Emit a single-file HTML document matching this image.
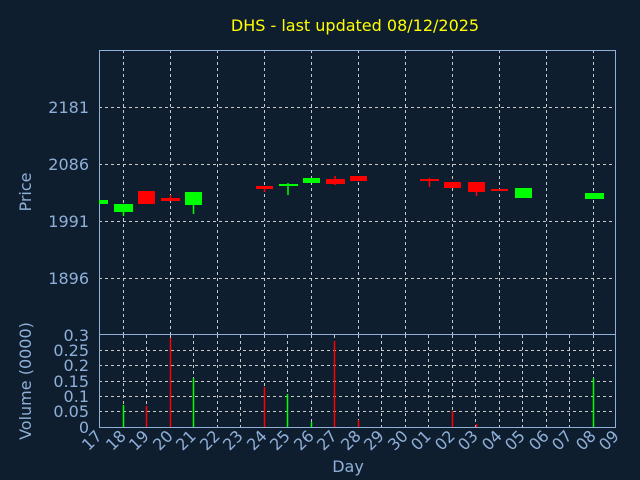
<!DOCTYPE html>
<html><head><style>
html,body{margin:0;padding:0;background:#0f1e2f;}
svg{display:block;font-family:"DejaVu Sans","Liberation Sans",sans-serif;}
</style></head><body>
<svg width="640" height="480" viewBox="0 0 640 480" xmlns="http://www.w3.org/2000/svg">
<rect width="640" height="480" fill="#0f1e2f"/>
<text x="355" y="31" fill="#ffff00" font-size="16" text-anchor="middle">DHS - last updated 08/12/2025</text>
<g stroke="#c8c8c8" stroke-width="1" stroke-dasharray="3,3">
<line x1="99" y1="107.5" x2="616" y2="107.5"/>
<line x1="99" y1="164.5" x2="616" y2="164.5"/>
<line x1="99" y1="221.5" x2="616" y2="221.5"/>
<line x1="99" y1="278.5" x2="616" y2="278.5"/>
<line x1="123.5" y1="50" x2="123.5" y2="334"/><line x1="170.5" y1="50" x2="170.5" y2="334"/>
<line x1="217.5" y1="50" x2="217.5" y2="334"/><line x1="264.5" y1="50" x2="264.5" y2="334"/>
<line x1="311.5" y1="50" x2="311.5" y2="334"/><line x1="358.5" y1="50" x2="358.5" y2="334"/>
<line x1="405.5" y1="50" x2="405.5" y2="334"/><line x1="452.5" y1="50" x2="452.5" y2="334"/>
<line x1="499.5" y1="50" x2="499.5" y2="334"/><line x1="546.5" y1="50" x2="546.5" y2="334"/>
<line x1="593.5" y1="50" x2="593.5" y2="334"/>
<line x1="99" y1="350.5" x2="616" y2="350.5"/><line x1="99" y1="365.5" x2="616" y2="365.5"/>
<line x1="99" y1="381.5" x2="616" y2="381.5"/><line x1="99" y1="396.5" x2="616" y2="396.5"/>
<line x1="99" y1="411.5" x2="616" y2="411.5"/>
<line x1="123.5" y1="335" x2="123.5" y2="427"/><line x1="146.5" y1="335" x2="146.5" y2="427"/>
<line x1="170.5" y1="335" x2="170.5" y2="427"/><line x1="193.5" y1="335" x2="193.5" y2="427"/>
<line x1="217.5" y1="335" x2="217.5" y2="427"/><line x1="240.5" y1="335" x2="240.5" y2="427"/>
<line x1="264.5" y1="335" x2="264.5" y2="427"/><line x1="287.5" y1="335" x2="287.5" y2="427"/>
<line x1="311.5" y1="335" x2="311.5" y2="427"/><line x1="334.5" y1="335" x2="334.5" y2="427"/>
<line x1="358.5" y1="335" x2="358.5" y2="427"/><line x1="381.5" y1="335" x2="381.5" y2="427"/>
<line x1="405.5" y1="335" x2="405.5" y2="427"/><line x1="428.5" y1="335" x2="428.5" y2="427"/>
<line x1="452.5" y1="335" x2="452.5" y2="427"/><line x1="475.5" y1="335" x2="475.5" y2="427"/>
<line x1="499.5" y1="335" x2="499.5" y2="427"/><line x1="522.5" y1="335" x2="522.5" y2="427"/>
<line x1="546.5" y1="335" x2="546.5" y2="427"/><line x1="569.5" y1="335" x2="569.5" y2="427"/>
<line x1="593.5" y1="335" x2="593.5" y2="427"/>
</g>
<g fill="none" stroke="#8fb0d8" stroke-width="1">
<rect x="99.5" y="50.5" width="516" height="284"/>
<rect x="99.5" y="334.5" width="516" height="93"/>
</g>
<g stroke-width="1.5">
<rect x="99" y="200" width="9" height="4" fill="#00ff00"/>
<line x1="123.5" y1="212" x2="123.5" y2="216" stroke="#00ff00"/><rect x="114" y="204" width="19" height="8" fill="#00ff00"/>
<rect x="138" y="191" width="17" height="13" fill="#ff0000"/>
<line x1="170.5" y1="195" x2="170.5" y2="200" stroke="#ff0000"/><rect x="161" y="198" width="19" height="3" fill="#ff0000"/>
<line x1="193.5" y1="204" x2="193.5" y2="214" stroke="#00ff00"/><rect x="185" y="192" width="17" height="13" fill="#00ff00"/>
<line x1="264.5" y1="186" x2="264.5" y2="192" stroke="#ff0000"/><rect x="256" y="186" width="17" height="3" fill="#ff0000"/>
<line x1="288" y1="183" x2="288" y2="195" stroke="#00ff00"/><rect x="279" y="184" width="19" height="2" fill="#00ff00"/>
<rect x="303" y="178" width="17" height="5" fill="#00ff00"/>
<line x1="335" y1="176" x2="335" y2="185" stroke="#ff0000"/><rect x="326" y="179" width="19" height="5" fill="#ff0000"/>
<rect x="350" y="176" width="17" height="5" fill="#ff0000"/>
<line x1="429.5" y1="178" x2="429.5" y2="187" stroke="#ff0000"/><rect x="420" y="179" width="19" height="2" fill="#ff0000"/>
<rect x="444" y="182" width="17" height="6" fill="#ff0000"/>
<line x1="476.5" y1="188" x2="476.5" y2="196" stroke="#ff0000"/><rect x="468" y="182" width="17" height="10" fill="#ff0000"/>
<rect x="491" y="189" width="17" height="2" fill="#ff0000"/>
<rect x="515" y="188" width="17" height="10" fill="#00ff00"/>
<rect x="585" y="193" width="19" height="6" fill="#00ff00"/>
</g>
<g stroke-width="1.5">
<line x1="123.5" y1="405" x2="123.5" y2="427" stroke="#00ff00"/>
<line x1="146.5" y1="406" x2="146.5" y2="427" stroke="#ff0000"/>
<line x1="170.5" y1="338" x2="170.5" y2="427" stroke="#ff0000"/>
<line x1="193.5" y1="378" x2="193.5" y2="427" stroke="#00ff00"/>
<line x1="264.5" y1="387" x2="264.5" y2="427" stroke="#ff0000"/>
<line x1="287.5" y1="394" x2="287.5" y2="427" stroke="#00ff00"/>
<line x1="311.5" y1="422" x2="311.5" y2="427" stroke="#00ff00"/>
<line x1="334.5" y1="341" x2="334.5" y2="427" stroke="#ff0000"/>
<line x1="358.5" y1="420" x2="358.5" y2="427" stroke="#ff0000"/>
<line x1="452.5" y1="411" x2="452.5" y2="427" stroke="#ff0000"/>
<line x1="476.5" y1="424" x2="476.5" y2="427" stroke="#ff0000"/>
<line x1="593.5" y1="378" x2="593.5" y2="427" stroke="#00ff00"/>
</g>
<g fill="#8fb0d8" font-size="16" text-anchor="end">
<text x="89" y="113">2181</text><text x="89" y="170">2086</text>
<text x="89" y="227">1991</text><text x="89" y="284">1896</text>
<text x="89" y="341">0.3</text><text x="89" y="356">0.25</text>
<text x="89" y="371">0.2</text><text x="89" y="387">0.15</text>
<text x="89" y="402">0.1</text><text x="89" y="417">0.05</text>
<text x="89" y="433">0</text>
</g>
<g fill="#8fb0d8" font-size="16" text-anchor="middle">
<text transform="translate(31,192) rotate(-90)">Price</text>
<text transform="translate(31,381) rotate(-90)">Volume (0000)</text>
<text x="348" y="472">Day</text>
</g>
<g fill="#8fb0d8" font-size="16" text-anchor="end">
<text transform="translate(103,437) rotate(-45)">17</text>
<text transform="translate(127,437) rotate(-45)">18</text>
<text transform="translate(150,437) rotate(-45)">19</text>
<text transform="translate(174,437) rotate(-45)">20</text>
<text transform="translate(197,437) rotate(-45)">21</text>
<text transform="translate(221,437) rotate(-45)">22</text>
<text transform="translate(244,437) rotate(-45)">23</text>
<text transform="translate(268,437) rotate(-45)">24</text>
<text transform="translate(291,437) rotate(-45)">25</text>
<text transform="translate(315,437) rotate(-45)">26</text>
<text transform="translate(338,437) rotate(-45)">27</text>
<text transform="translate(362,437) rotate(-45)">28</text>
<text transform="translate(385,437) rotate(-45)">29</text>
<text transform="translate(409,437) rotate(-45)">30</text>
<text transform="translate(432,437) rotate(-45)">01</text>
<text transform="translate(456,437) rotate(-45)">02</text>
<text transform="translate(479,437) rotate(-45)">03</text>
<text transform="translate(503,437) rotate(-45)">04</text>
<text transform="translate(526,437) rotate(-45)">05</text>
<text transform="translate(550,437) rotate(-45)">06</text>
<text transform="translate(573,437) rotate(-45)">07</text>
<text transform="translate(597,437) rotate(-45)">08</text>
<text transform="translate(620,437) rotate(-45)">09</text>
</g>
</svg>
</body></html>
